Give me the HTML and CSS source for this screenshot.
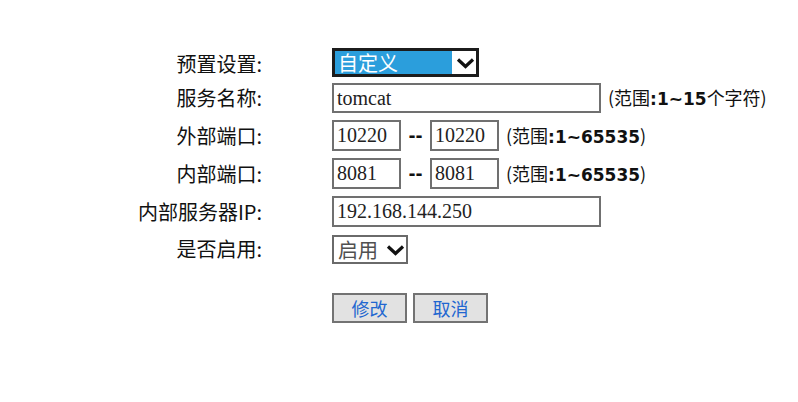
FILE: index.html
```html
<!DOCTYPE html>
<html lang="zh">
<head>
<meta charset="utf-8">
<title>端口映射</title>
<link rel="stylesheet" href="styles.css">
</head>
<body>
<form class="form">
  <label class="lbl lbl-first">预置设置:</label>
  <div class="field field-first">
    <div class="sel sel-preset">
      <span class="sel-text">自定义</span>
      <svg class="chev" width="19" height="12" viewBox="0 0 19 12"><path d="M2 2.5 L9.5 9.5 L17 2.5" fill="none" stroke="#111" stroke-width="3.2"/></svg>
    </div>
  </div>

  <label class="lbl">服务名称:</label>
  <div class="field field-name">
    <div class="inp inp-wide inp-name">tomcat</div>
    <span class="hint">(范围<b>:1~15</b>个字符)</span>
  </div>

  <label class="lbl">外部端口:</label>
  <div class="field">
    <div class="inp inp-port">10220</div>
    <span class="dash">--</span>
    <div class="inp inp-port">10220</div>
    <span class="hint">(范围<b>:1~65535</b>)</span>
  </div>

  <label class="lbl">内部端口:</label>
  <div class="field">
    <div class="inp inp-port">8081</div>
    <span class="dash">--</span>
    <div class="inp inp-port">8081</div>
    <span class="hint">(范围<b>:1~65535</b>)</span>
  </div>

  <label class="lbl">内部服务器IP:</label>
  <div class="field">
    <div class="inp inp-wide">192.168.144.250</div>
  </div>

  <label class="lbl">是否启用:</label>
  <div class="field field-enable">
    <div class="sel sel-enable">
      <span class="sel-text2">启用</span>
      <svg class="chev" width="19" height="12" viewBox="0 0 19 12"><path d="M2 2.5 L9.5 9.5 L17 2.5" fill="none" stroke="#111" stroke-width="3.2"/></svg>
    </div>
  </div>

  <div class="buttons">
    <button type="button" class="btn">修改</button>
    <button type="button" class="btn">取消</button>
  </div>
</form>
</body>
</html>
```
FILE: styles.css
```css
html, body {
  margin: 0;
  padding: 0;
  background: #ffffff;
}

body {
  font-family: "Noto Sans CJK SC", "Noto Sans", sans-serif;
  color: #111;
}

.form {
  display: grid;
  grid-template-columns: 262px auto;
  column-gap: 70px;
  row-gap: 7px;
  padding-top: 48px;
  align-items: center;
}

.lbl {
  text-align: right;
  font-size: 20px;
  line-height: 24px;
  white-space: nowrap;
}

.lbl-first {
  padding-top: 3px;
}

.field {
  display: flex;
  align-items: center;
  height: 31px;
}

.field-first {
  height: 29px;
  margin-bottom: -1px;
}

.field-name {
  height: 30px;
}

.field-enable {
  height: 29px;
  margin-top: 1px;
}

.sel {
  box-sizing: border-box;
  display: flex;
  align-items: center;
  height: 29px;
}

.sel-preset {
  width: 147px;
  border: 3px solid #1c1c1c;
  padding: 0;
}

.sel-text {
  background: #2b9edc;
  color: #ffffff;
  height: 23px;
  width: 117px;
  font-size: 20px;
  line-height: 23px;
  padding-left: 3px;
  box-sizing: border-box;
}

.sel-preset .chev {
  margin-left: 4px;
}

.sel-enable {
  width: 76px;
  border: 2px solid #6a6a6a;
  padding-left: 4px;
  color: #505050;
}

.sel-text2 {
  font-size: 20px;
  line-height: 24px;
  width: 48px;
}

.inp {
  box-sizing: border-box;
  height: 31px;
  border: 2px solid #707070;
  font-family: "Liberation Serif", serif;
  font-size: 20px;
  line-height: 27px;
  padding-left: 3px;
  color: #222;
  white-space: nowrap;
}

.inp-name {
  height: 30px;
  line-height: 26px;
}

.inp-wide {
  width: 269px;
}

.inp-port {
  width: 69px;
}

.dash {
  width: 29px;
  text-align: center;
  font-family: "DejaVu Sans", sans-serif;
  font-weight: bold;
  font-size: 17px;
  line-height: 20px;
}

.hint {
  margin-left: 7px;
  font-size: 18px;
  line-height: 24px;
  white-space: nowrap;
}

.hint b {
  font-family: "DejaVu Sans", sans-serif;
  font-weight: bold;
  font-size: 17px;
}

.buttons {
  grid-column: 2;
  display: flex;
  gap: 6px;
  margin-top: 22px;
}

.btn {
  box-sizing: border-box;
  width: 75px;
  height: 30px;
  background: #e2e2e2;
  border: 2px solid #737373;
  border-radius: 0;
  color: #2166d0;
  font-family: "Noto Sans CJK SC", sans-serif;
  font-size: 18px;
  line-height: 24px;
  padding: 0;
}
```
